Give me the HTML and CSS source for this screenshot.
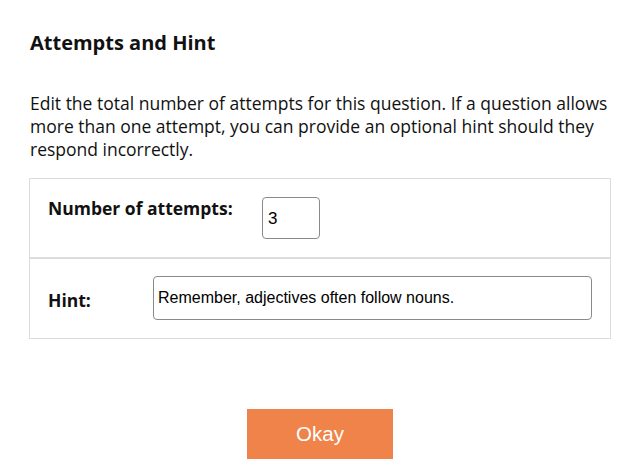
FILE: index.html
```html
<!DOCTYPE html>
<html>
<head>
<meta charset="utf-8">
<link rel="stylesheet" href="styles.css">
</head>
<body>
<div class="page">
  <h1 class="title">Attempts and Hint</h1>
  <p class="intro">Edit the total number of attempts for this question. If a question allows more than one attempt, you can provide an optional hint should they respond incorrectly.</p>
  <div class="panel">
    <div class="row row-attempts">
      <label class="label label-attempts">Number of attempts:</label>
      <input class="field field-attempts" type="text" value="3">
    </div>
    <div class="row row-hint">
      <label class="label label-hint">Hint:</label>
      <input class="field field-hint" type="text" value="Remember, adjectives often follow nouns.">
    </div>
  </div>
  <div class="actions">
    <button class="okay">Okay</button>
  </div>
</div>
</body>
</html>
```
FILE: styles.css
```css
html, body {
  margin: 0;
  padding: 0;
  background: #fff;
}
.page {
  padding: 30px 0 0 29px;
  font-family: "Open Sans", sans-serif;
  color: #111;
}
.title {
  margin: 0 0 36px 1px;
  font-size: 20px;
  line-height: 26px;
  font-weight: 700;
}
.intro {
  margin: 0 0 17px 1px;
  width: 580px;
  font-size: 17.5px;
  line-height: 23px;
}
.panel {
  width: 582px;
}
.row {
  display: flex;
  border: 1px solid #dcdcdc;
}
.row-attempts {
  align-items: flex-start;
  padding: 18px 18px 18px 18px;
}
.row-hint {
  align-items: center;
  padding: 17px 18px 18px 18px;
  border-top: 1px solid #dcdcdc;
}
.label {
  font-size: 17.5px;
  line-height: 22px;
  font-weight: 700;
}
.label-attempts {
  width: 214px;
}
.label-hint {
  width: 105px;
  margin-top: 4px;
}
.field {
  box-sizing: border-box;
  border: 1px solid #8a8a8a;
  border-radius: 4px;
  font-family: "Liberation Sans", Arial, sans-serif;
  color: #000;
  background: #fff;
  margin: 0;
  outline: none;
}
.field-attempts {
  width: 58px;
  height: 42px;
  font-size: 17px;
  padding: 2px 0 0 5px;
}
.field-hint {
  width: 439px;
  height: 44px;
  font-size: 16px;
  padding: 0 0 0 4px;
}
.actions {
  display: flex;
  justify-content: center;
  margin: 70px 0 0 -29px;
}
.okay {
  width: 146px;
  height: 50px;
  border: none;
  background: #f0834a;
  color: #fff;
  font-family: "Liberation Sans", Arial, sans-serif;
  font-size: 20.5px;
  padding: 0;
}
```
